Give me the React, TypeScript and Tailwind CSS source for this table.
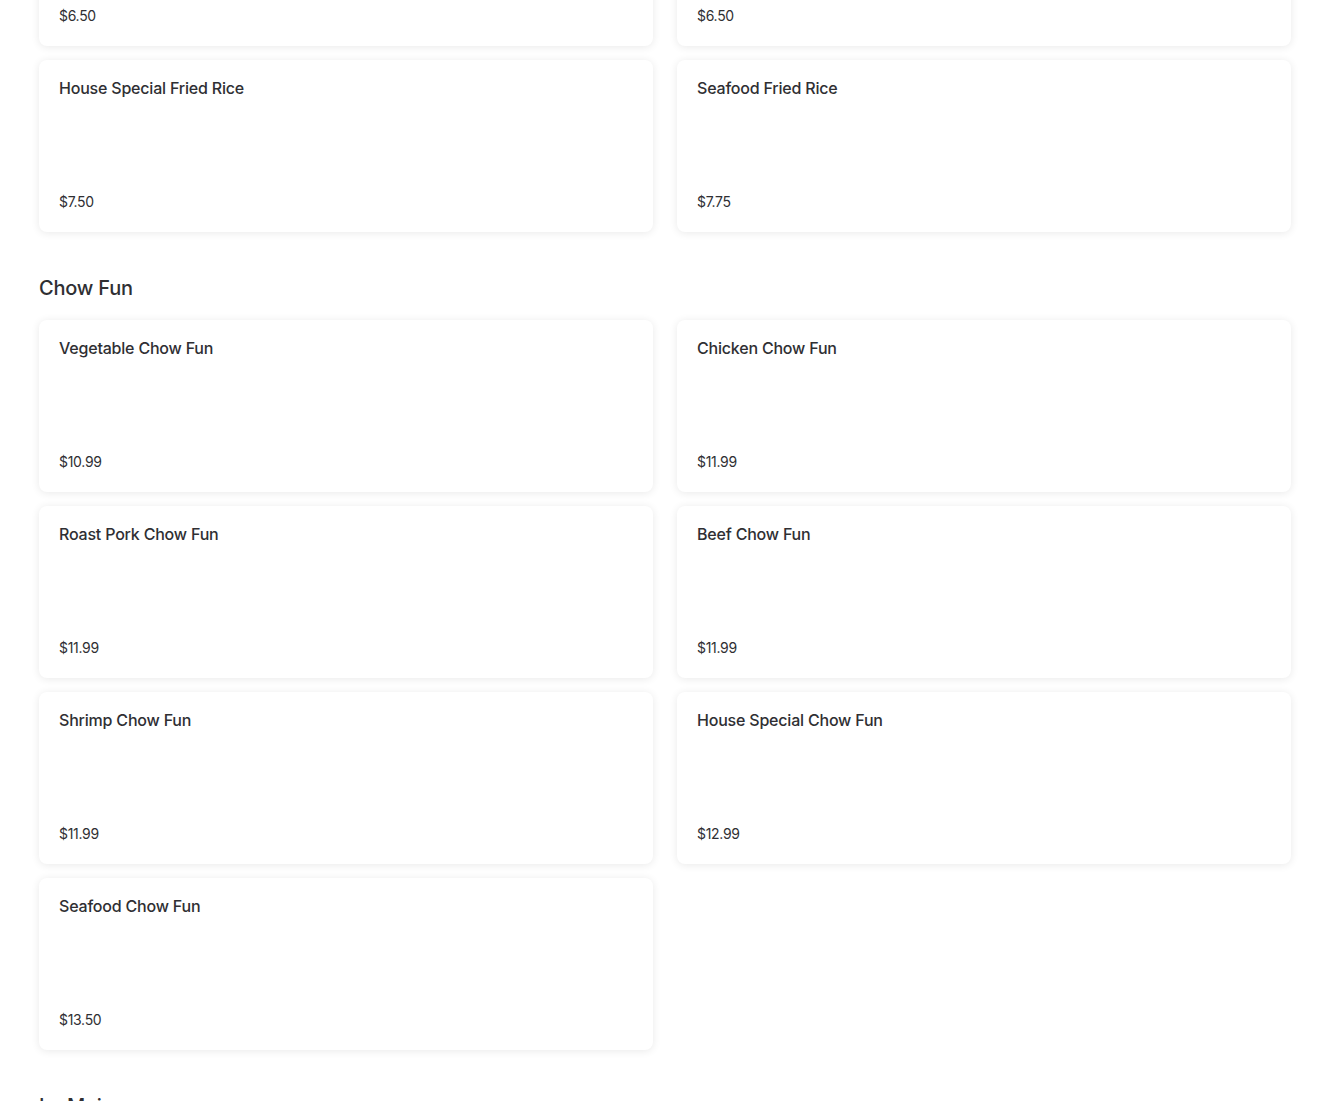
import React from 'react';

type Item = { name: string; price: string };

const sections: { title: string; items: Item[]; hideTitle?: boolean }[] = [
  {
    title: 'Fried Rice',
    hideTitle: true,
    items: [
      { name: 'Shrimp Fried Rice', price: '$6.50' },
      { name: 'Beef Fried Rice', price: '$6.50' },
      { name: 'House Special Fried Rice', price: '$7.50' },
      { name: 'Seafood Fried Rice', price: '$7.75' },
    ],
  },
  {
    title: 'Chow Fun',
    items: [
      { name: 'Vegetable Chow Fun', price: '$10.99' },
      { name: 'Chicken Chow Fun', price: '$11.99' },
      { name: 'Roast Pork Chow Fun', price: '$11.99' },
      { name: 'Beef Chow Fun', price: '$11.99' },
      { name: 'Shrimp Chow Fun', price: '$11.99' },
      { name: 'House Special Chow Fun', price: '$12.99' },
      { name: 'Seafood Chow Fun', price: '$13.50' },
    ],
  },
  {
    title: 'Lo Mein',
    items: [
      { name: 'Vegetable Lo Mein', price: '$9.99' },
      { name: 'Chicken Lo Mein', price: '$10.99' },
    ],
  },
];

const MenuCard = ({ item }: { item: Item }) => (
  <div className="flex h-[172px] flex-col justify-between rounded-lg bg-white px-5 pt-4 pb-5 shadow-[0_1px_8px_rgba(0,0,0,0.09)]">
    <div className="text-base leading-6 font-medium tracking-[-0.2px] text-[#2f2f33]">{item.name}</div>
    <div className="text-sm leading-5 tracking-[-0.3px] text-[#2f2f33]">{item.price}</div>
  </div>
);

export default function App() {
  return (
    <div className="h-[1101px] overflow-hidden bg-white font-['Inter',sans-serif]">
      <div className="-mt-[126px] flex flex-col gap-[42px] px-[39px]">
        {sections.map((section) => (
          <section key={section.title} className="flex flex-col gap-[18px]">
            {!section.hideTitle && (
              <h2 className="text-xl leading-7 font-medium tracking-[-0.2px] text-[#2f2f33]">{section.title}</h2>
            )}
            <div className="grid grid-cols-2 gap-x-6 gap-y-[14px]">
              {section.items.map((item) => (
                <MenuCard key={item.name} item={item} />
              ))}
            </div>
          </section>
        ))}
      </div>
    </div>
  );
}
